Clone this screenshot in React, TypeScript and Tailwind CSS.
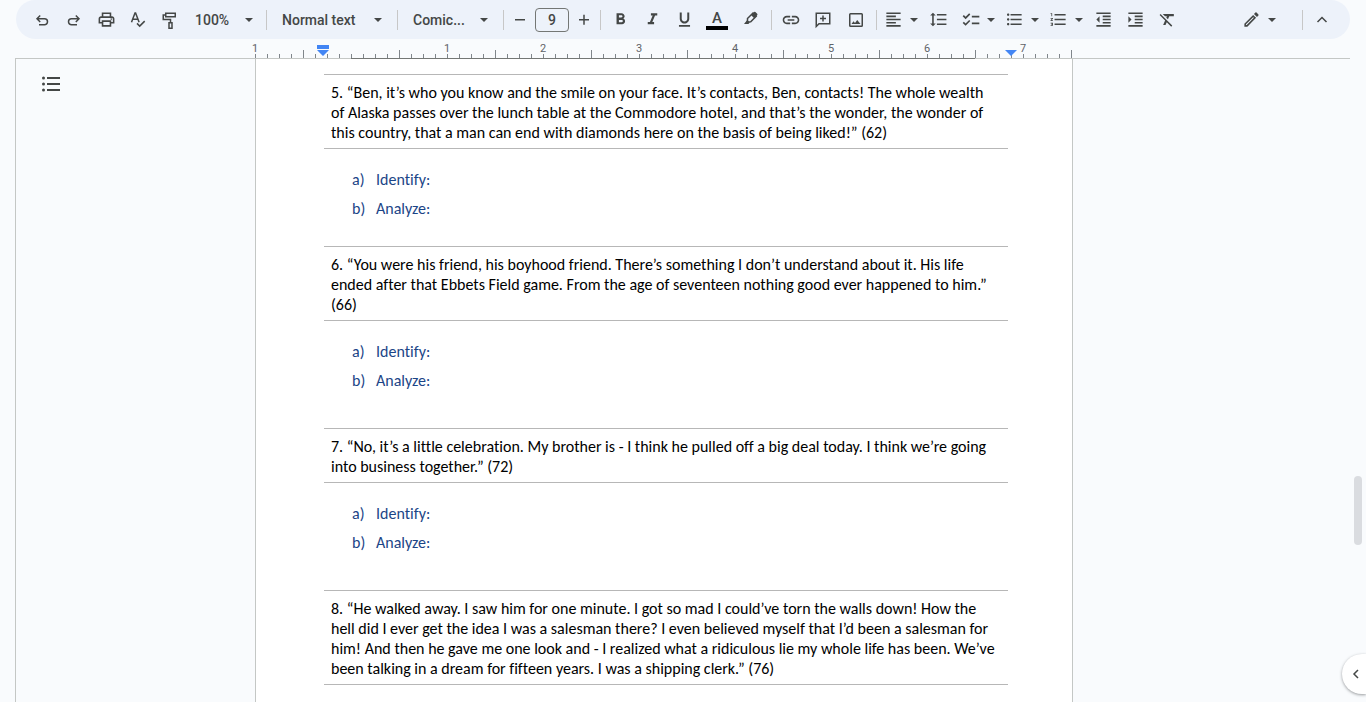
import type { ReactNode } from "react";
import clsx from "clsx";
import {
    MdChecklist,
    MdFormatAlignLeft,
    MdFormatBold,
    MdFormatClear,
    MdFormatIndentDecrease,
    MdFormatIndentIncrease,
    MdFormatItalic,
    MdFormatLineSpacing,
    MdFormatListBulleted,
    MdFormatListNumbered,
    MdFormatUnderlined,
    MdLink,
    MdOutlineModeEdit,
    MdOutlinePrint,
} from "react-icons/md";

interface Question {
    lines: string[];
    answers?: string[];
    spacing?: string;
}

const answers = ["Identify:", "Analyze:"];

const questions: Question[] = [
    {
        lines: [
            "5. “Ben, it’s who you know and the smile on your face. It’s contacts, Ben, contacts! The whole wealth",
            "of Alaska passes over the lunch table at the Commodore hotel, and that’s the wonder, the wonder of",
            "this country, that a man can end with diamonds here on the basis of being liked!” (62)",
        ],
        answers,
        spacing: "pb-[27px]",
    },
    {
        lines: [
            "6. “You were his friend, his boyhood friend. There’s something I don’t understand about it. His life",
            "ended after that Ebbets Field game. From the age of seventeen nothing good ever happened to him.”",
            "(66)",
        ],
        answers,
        spacing: "pb-[37px]",
    },
    {
        lines: [
            "7. “No, it’s a little celebration. My brother is - I think he pulled off a big deal today. I think we’re going",
            "into business together.” (72)",
        ],
        answers,
        spacing: "pb-[37px]",
    },
    {
        lines: [
            "8. “He walked away. I saw him for one minute. I got so mad I could’ve torn the walls down! How the",
            "hell did I ever get the idea I was a salesman there? I even believed myself that I’d been a salesman for",
            "him! And then he gave me one look and - I realized what a ridiculous lie my whole life has been. We’ve",
            "been talking in a dream for fifteen years. I was a shipping clerk.” (76)",
        ],
    },
];

function Icon({ children }: { children: ReactNode }) {
    return (
        <svg viewBox="0 0 20 20" className="h-5 w-5 shrink-0" fill="none" stroke="currentColor" strokeWidth="1.5">
            {children}
        </svg>
    );
}

function Caret() {
    return (
        <svg viewBox="0 0 8 4" className="h-1 w-2 shrink-0" fill="currentColor">
            <path d="M0 0h8L4 4z" />
        </svg>
    );
}

function Divider({ className }: { className?: string }) {
    return <div className={clsx("h-5 w-px shrink-0 bg-[#c7c7c7]", className)} />;
}

function Tool({ label, className = "w-8", children }: { label: string; className?: string; children: ReactNode }) {
    return (
        <button type="button" aria-label={label} className={clsx("flex h-8 shrink-0 items-center justify-center", className)}>
            {children}
        </button>
    );
}

function SplitTool({ label, children }: { label: string; children: ReactNode }) {
    return (
        <button type="button" aria-label={label} className="flex h-8 w-11 shrink-0 items-center justify-between pr-1 pl-1.5">
            {children}
            <Caret />
        </button>
    );
}

function Picker({ label, className, children }: { label: string; className: string; children: ReactNode }) {
    return (
        <button
            type="button"
            aria-label={label}
            className={clsx("flex h-8 shrink-0 items-center justify-between text-sm font-medium", className)}
        >
            {children}
            <Caret />
        </button>
    );
}

function Toolbar() {
    return (
        <div className="mr-4 ml-4 flex h-[39px] shrink-0 items-center rounded-b-[20px] rounded-t-[19px] bg-[#edf2fa] pr-3 pl-2.5 text-[#444746]">
            <Tool label="Undo">
                <Icon>
                    <path d="M7 14.75h5.5a3 3 0 0 0 0-6H5M8.2 5.5 5 8.75 8.2 12" />
                </Icon>
            </Tool>
            <Tool label="Redo">
                <Icon>
                    <path d="M13 14.75H7.5a3 3 0 0 1 0-6H15M11.8 5.5 15 8.75 11.8 12" />
                </Icon>
            </Tool>
            <Tool label="Print"><MdOutlinePrint size={19} /></Tool>
            <Tool label="Spelling and grammar check">
                <Icon>
                    <path d="M3.5 12.2 7 3h.6l3.5 9.2M4.7 9.3h5.2M9 13.4l2.7 2.7 5-5" />
                </Icon>
            </Tool>
            <Tool label="Paint format">
                <Icon>
                    <path d="M5.75 3.25h9.5v3.5h-9.5zM5.75 5h-2.5v4.5h7.25v3M9 12.75h3v5.5H9z" />
                </Icon>
            </Tool>
            <Picker label="Zoom" className="w-20 pr-[13px] pl-[9px]">100%</Picker>
            <Divider />
            <Picker label="Styles" className="w-[130px] pr-[15px] pl-[15px]">Normal text</Picker>
            <Divider />
            <Picker label="Font" className="w-[105px] pr-[15px] pl-[15px]">Comic...</Picker>
            <Divider />
            <Tool label="Decrease font size" className="w-[31px]">
                <Icon><path d="M5 9.75h10" /></Icon>
            </Tool>
            <input
                aria-label="Font size"
                defaultValue="9"
                className="h-6 w-[34px] shrink-0 rounded border border-[#747775] bg-transparent text-center text-sm font-medium outline-none"
            />
            <Tool label="Increase font size" className="w-[30px]">
                <Icon><path d="M5 9.75h10M10 4.75v10" /></Icon>
            </Tool>
            <Divider className="mr-[3px] ml-px" />
            <Tool label="Bold"><MdFormatBold size={19} /></Tool>
            <Tool label="Italic"><MdFormatItalic size={19} /></Tool>
            <Tool label="Underline"><MdFormatUnderlined size={19} /></Tool>
            <Tool label="Text color" className="w-[34px] flex-col">
                <span className="text-[15px] leading-4 font-medium">A</span>
                <span className="h-1 w-[22px] bg-black" />
            </Tool>
            <Tool label="Highlight color" className="w-[34px]">
                <Icon>
                    <path d="M6.5 8.5 12 3l3.2 3.2-5.5 5.5-3.2.3z" />
                    <path d="M10 5 13 2q.7-.6 1.4 0l1.8 1.8q.6.7 0 1.4l-3 3zM3 14l3.2-4 2.6 2.6L7.4 14z" fill="currentColor" stroke="none" />
                </Icon>
            </Tool>
            <Divider className="mx-[3px]" />
            <Tool label="Insert link"><MdLink size={20} /></Tool>
            <Tool label="Add comment">
                <Icon>
                    <path d="M3.25 16.5V3.25h13.5v10.5H6zM10 5.5v6M7 8.5h6" />
                </Icon>
            </Tool>
            <Tool label="Insert image" className="w-[34px]">
                <Icon>
                    <rect x="3.75" y="3.75" width="12.5" height="12.5" rx="0.75" />
                    <path d="m5.5 14 2-2.8L9 13l2.2-3 3.3 4z" fill="currentColor" stroke="none" />
                </Icon>
            </Tool>
            <Divider className="mr-px ml-[3px]" />
            <SplitTool label="Align"><MdFormatAlignLeft size={19} /></SplitTool>
            <Tool label="Line spacing" className="w-[33px]"><MdFormatLineSpacing size={19} /></Tool>
            <SplitTool label="Checklist"><MdChecklist size={20} /></SplitTool>
            <SplitTool label="Bulleted list"><MdFormatListBulleted size={19} /></SplitTool>
            <SplitTool label="Numbered list"><MdFormatListNumbered size={19} /></SplitTool>
            <Tool label="Decrease indent"><MdFormatIndentDecrease size={19} /></Tool>
            <Tool label="Increase indent"><MdFormatIndentIncrease size={19} /></Tool>
            <Tool label="Clear formatting"><MdFormatClear size={19} /></Tool>
            <div className="ml-auto flex items-center">
                <SplitTool label="Editing mode"><MdOutlineModeEdit size={19} /></SplitTool>
                <Divider className="mr-[3px] ml-[22px]" />
                <Tool label="Hide the menus">
                    <Icon><path d="m5.5 12 4.5-4.5 4.5 4.5" /></Icon>
                </Tool>
            </div>
        </div>
    );
}

function Ruler() {
    const ticks = Array.from({ length: 69 }, (_, i) => i);

    return (
        <div className="relative ml-[255px] flex h-[19px] w-[828px] shrink-0 items-end text-[11px] text-[#5f6368]">
            {ticks.map((i) => {
                const inch = Math.abs(i / 8 - 1);
                return (
                    <div key={i} className="relative flex h-full w-3 shrink-0 items-end">
                        <span className={clsx("w-px bg-[#80868b]", i % 8 === 4 ? "h-2" : "h-1")} />
                        {i % 8 === 0 && inch > 0 && (
                            <span className="absolute top-1 left-0 w-4 -translate-x-1/2 text-center leading-3">{inch}</span>
                        )}
                    </div>
                );
            })}
            {/* dark part of the baseline, between the page margins */}
            <div className="absolute -bottom-px left-24 z-10 h-px w-[624px] bg-[#747775]" />
            <svg viewBox="0 0 12 11" className="absolute top-[6px] left-[62px] h-[11px] w-3" fill="#4285f4">
                <path d="M0 0h12v4H0zM0 5h12l-6 6z" />
            </svg>
            <svg viewBox="0 0 12 6" className="absolute top-[11px] left-[750px] h-1.5 w-3" fill="#4285f4">
                <path d="M0 0h12L6 6z" />
            </svg>
        </div>
    );
}

function QuestionBlock({ question }: { question: Question }) {
    return (
        <section>
            <p className="border-y border-[#b7b7b7] pt-2 pb-[5px] pl-[7px] whitespace-nowrap">
                {question.lines.map((line) => (
                    <span key={line} className="block">{line}</span>
                ))}
            </p>
            {question.answers && (
                <ol className={clsx("space-y-[9px] pt-[21px] pl-7 text-[#1c4587]", question.spacing)}>
                    {question.answers.map((answer, i) => (
                        <li key={answer} className="flex">
                            <span className="w-6">{i === 0 ? "a)" : "b)"}</span>
                            {answer}
                        </li>
                    ))}
                </ol>
            )}
        </section>
    );
}

export default function App() {
    return (
        <div className="relative flex h-screen flex-col overflow-hidden bg-[#f9fbfd] font-[Roboto,sans-serif]">
            <Toolbar />
            <Ruler />
            <div className="mr-4 ml-[15px] flex min-h-0 flex-1 border-t border-l border-[#c4c7c5]">
                <aside className="w-[239px] shrink-0 pt-[13px] pl-[23px] text-[#444746]">
                    <button type="button" aria-label="Show document outline" className="block">
                        <svg viewBox="0 0 24 24" className="h-6 w-6" fill="currentColor">
                            <path d="M8 5h13v2H8zM8 11h13v2H8zM8 17h13v2H8z" />
                            <circle cx="4.5" cy="6" r="1.5" />
                            <circle cx="4.5" cy="12" r="1.5" />
                            <circle cx="4.5" cy="18" r="1.5" />
                        </svg>
                    </button>
                </aside>
                <main className="w-[818px] shrink-0 overflow-hidden border-x border-[#c4c7c5] bg-white pt-[15px] pr-16 pl-[68px] font-[Carlito,Lato,sans-serif] text-base leading-5 text-black [font-variant-ligatures:none]">
                    {questions.map((question) => (
                        <QuestionBlock key={question.lines[0]} question={question} />
                    ))}
                </main>
            </div>
            <div className="absolute top-[476px] right-1 h-[69px] w-2 rounded-full bg-[#dadce0]" />
            <button
                type="button"
                aria-label="Show side panel"
                className="absolute right-0 bottom-2 flex h-10 w-6 items-center rounded-l-full bg-white pl-1 text-[#444746] shadow-[0_1px_3px_rgba(60,64,67,0.5)]"
            >
                <Icon><path d="M12 6 8 10l4 4" /></Icon>
            </button>
        </div>
    );
}
